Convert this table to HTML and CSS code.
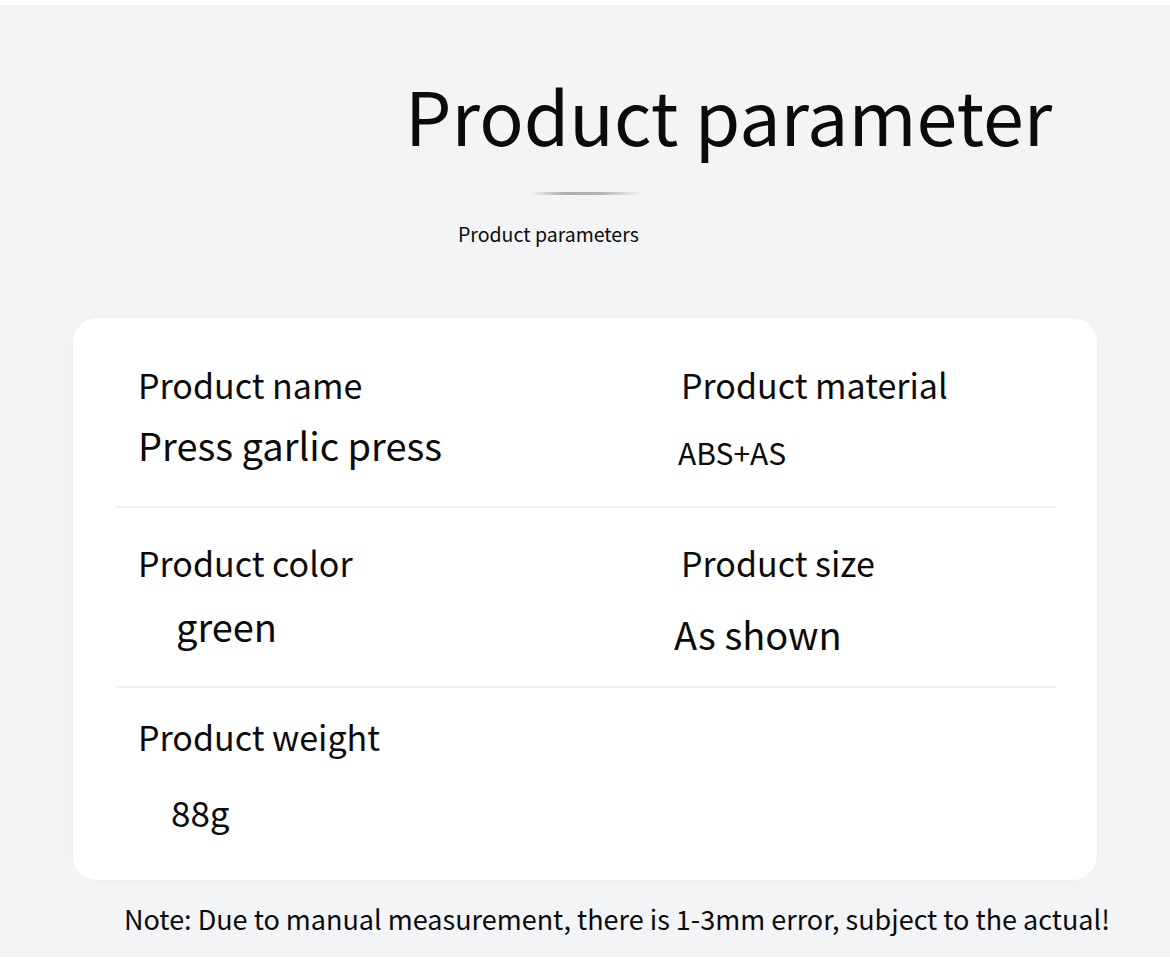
FILE: index.html
```html
<!DOCTYPE html>
<html lang="en">
<head>
<meta charset="utf-8">
<title>Product parameter</title>
<link rel="stylesheet" href="styles.css">
</head>
<body>
<div class="page">
  <h1 class="title">Product parameter</h1>
  <div class="rule"></div>
  <p class="sub">Product parameters</p>
  <section class="card">
    <div class="row row1">
      <div class="cell">
        <div class="label">Product name</div>
        <div class="value v-name">Press garlic press</div>
      </div>
      <div class="cell">
        <div class="label">Product material</div>
        <div class="value v-material">ABS+AS</div>
      </div>
    </div>
    <div class="row row2">
      <div class="cell">
        <div class="label">Product color</div>
        <div class="value v-color">green</div>
      </div>
      <div class="cell">
        <div class="label">Product size</div>
        <div class="value v-size">As shown</div>
      </div>
    </div>
    <div class="row row3">
      <div class="cell">
        <div class="label">Product weight</div>
        <div class="value v-weight">88g</div>
      </div>
      <div class="cell"></div>
    </div>
  </section>
  <p class="note">Note: Due to manual measurement, there is 1-3mm error, subject to the actual!</p>
</div>
</body>
</html>
```

FILE: styles.css
```css
html, body {
  margin: 0;
  padding: 0;
  background: #ffffff;
}
body {
  width: 1170px;
  height: 976px;
  overflow: hidden;
  font-family: "Noto Sans CJK SC", "Noto Sans", sans-serif;
  color: #0b0b0b;
}
.page {
  margin-top: 5px;
  height: 952px;
  background: #f3f4f6;
  padding-top: 73px;
  box-sizing: border-box;
  overflow: hidden;
}
.title {
  margin: 0 0 0 405px;
  font-size: 73.5px;
  line-height: 72px;
  font-weight: 400;
}
.rule {
  margin: 42px 0 0 530px;
  width: 113px;
  height: 3px;
  border-radius: 2px;
  background: linear-gradient(90deg, rgba(150,150,150,0) 0%, rgba(150,150,150,0.75) 30%, rgba(150,150,150,0.7) 60%, rgba(150,150,150,0) 100%);
}
.sub {
  margin: 29px 0 0 458px;
  font-size: 19.5px;
  line-height: 20px;
}
.card {
  margin: 74px 73px 0;
  height: 562px;
  background: #ffffff;
  border-radius: 24px;
  padding: 0 41px 0 43px;
  box-shadow: 0 0 4px rgba(0, 0, 0, 0.03);
}
.row {
  display: grid;
  grid-template-columns: 543px 1fr;
}
.row1 {
  height: 188px;
  border-bottom: 2px solid #eceef0;
}
.row2 {
  height: 178px;
  border-bottom: 2px solid #eceef0;
}
.cell {
  padding-left: 22px;
}
.row1 .cell { padding-top: 50px; }
.row2 .cell { padding-top: 38px; }
.row3 .cell { padding-top: 32px; }
.label {
  font-size: 34px;
  line-height: 34px;
}
.value {
  line-height: 1;
}
.v-name {
  font-size: 38px;
  margin-top: 24px;
}
.v-material {
  font-size: 30px;
  margin: 35px 0 0 -3px;
}
.v-color {
  font-size: 38px;
  margin: 27px 0 0 38px;
}
.v-size {
  font-size: 38px;
  margin: 35px 0 0 -7px;
}
.v-weight {
  font-size: 35px;
  margin: 40px 0 0 33px;
}
.note {
  margin: 25px 0 0 124px;
  font-size: 27px;
  line-height: 27px;
}
```
